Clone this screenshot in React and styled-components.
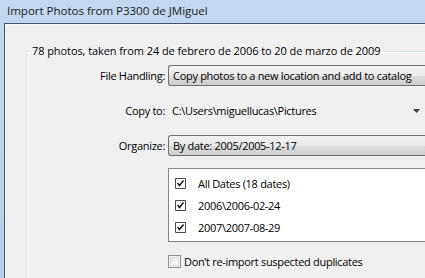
import React from "react";
import styled, { createGlobalStyle } from "styled-components";

const Global = createGlobalStyle`
  html, body { margin: 0; padding: 0; overflow: hidden; }
  body { font-family: "Open Sans", "Noto Sans", sans-serif; font-size: 11px; letter-spacing: -0.3px; color: #000; }
  * { box-sizing: border-box; }
`;

const Window = styled.div`
  width: 425px;
  height: 278px;
  overflow: hidden;
  display: flex;
  flex-direction: column;
  background: linear-gradient(180deg, #c3d8ee 0%, #bcd3ec 60%, #b4cde9 100%);
`;

const TitleBar = styled.div`
  height: 23px;
  line-height: 22px;
  padding-left: 7px;
  font-size: 11.6px;
  letter-spacing: -0.05px;
  color: #1e1e1e;
  white-space: nowrap;
`;

const Frame = styled.div`
  flex: 1;
  margin-left: 4px;
  border-top: 1px solid #44556a;
  border-left: 1px solid #44556a;
  background: #f0f0f0;
  box-shadow: inset 1px 1px 0 #f8f8f8;
  padding: 19px 0 0 21px;
  overflow: hidden;
`;

const Group = styled.fieldset`
  margin: 0;
  padding: 0;
  width: 520px;
  min-width: 0;
  height: 260px;
  border: 1px solid #d5dfe5;
  border-right: none;
  border-bottom: none;
  box-shadow: inset 1px 1px 0 #ffffff;
`;

const Legend = styled.legend`
  margin-left: 3px;
  padding: 0 2px;
  line-height: 16px;
  letter-spacing: -0.08px;
  white-space: nowrap;
`;

const Body = styled.div`
  padding-top: 6px;
  display: grid;
  grid-template-columns: 138px 1fr;
  column-gap: 3px;
  row-gap: 14px;
  align-items: center;
`;

const Label = styled.div`
  text-align: right;
  white-space: nowrap;
  line-height: 21px;
`;

const Select = styled.div`
  height: 21px;
  line-height: 19px;
  padding-left: 4px;
  border: 1px solid #707070;
  border-right: none;
  border-radius: 3px 0 0 3px;
  background: linear-gradient(180deg, #f2f2f2 0%, #ebebeb 50%, #dddddd 51%, #cfcfcf 100%);
  white-space: nowrap;
`;

const PathRow = styled.div`
  height: 21px;
  width: 252px;
  display: flex;
  align-items: center;
  justify-content: space-between;
  padding-left: 4px;
  white-space: nowrap;
`;

const ListBox = styled.div`
  grid-column: 2;
  margin-top: -2px;
  height: 74px;
  border: 1px solid #828790;
  border-right: none;
  background: #ffffff;
  padding: 3px 0;
`;

const ListRow = styled.div`
  height: 22px;
  display: flex;
  align-items: center;
  padding-left: 6px;
  gap: 12px;
`;

const CheckRow = styled.label`
  grid-column: 2;
  margin-top: -2px;
  display: flex;
  align-items: center;
  gap: 3px;
  height: 15px;
`;

const Box = styled.span`
  width: 13px;
  height: 13px;
  border: 1px solid #8f8f8f;
  background: linear-gradient(135deg, #dcdcdc 0%, #f4f4f4 60%, #ffffff 100%);
  box-shadow: inset 0 0 0 1px #f4f4f4, inset 0 0 0 2px #d8d8d8;
  flex: none;
`;

const ListCheck = () => (
  <svg width="11" height="11" viewBox="0 0 11 11" style={{ flex: "none" }}>
    <path d="M0.5 0.5 H10.5 V10.5 H0.5 Z" fill="#fff" stroke="#4a4a4a" />
    <path d="M2.5 5 L4.5 7.5 L8.5 2.5" fill="none" stroke="#1a1a1a" strokeWidth="1.5" />
  </svg>
);

const Arrow = () => (
  <svg width="7" height="4" viewBox="0 0 7 4">
    <path d="M0 0 H7 L3.5 4 Z" fill="#404040" />
  </svg>
);

const dates = ["All Dates (18 dates)", "2006\\2006-02-24", "2007\\2007-08-29"];

export default function App() {
  return (
    <>
      <Global />
      <Window>
        <TitleBar>Import Photos from P3300 de JMiguel</TitleBar>
        <Frame>
          <Group>
            <Legend>78 photos, taken from 24 de febrero de 2006 to 20 de marzo de 2009</Legend>
            <Body>
              <Label>File Handling:</Label>
              <Select>Copy photos to a new location and add to catalog</Select>
              <Label>Copy to:</Label>
              <PathRow>
                <span>C:\Users\miguellucas\Pictures</span>
                <Arrow />
              </PathRow>
              <Label>Organize:</Label>
              <Select>By date: 2005/2005-12-17</Select>
              <ListBox>
                {dates.map((d) => (
                  <ListRow key={d}>
                    <ListCheck />
                    <span>{d}</span>
                  </ListRow>
                ))}
              </ListBox>
              <CheckRow>
                <Box />
                <span>Don’t re-import suspected duplicates</span>
              </CheckRow>
            </Body>
          </Group>
        </Frame>
      </Window>
    </>
  );
}
